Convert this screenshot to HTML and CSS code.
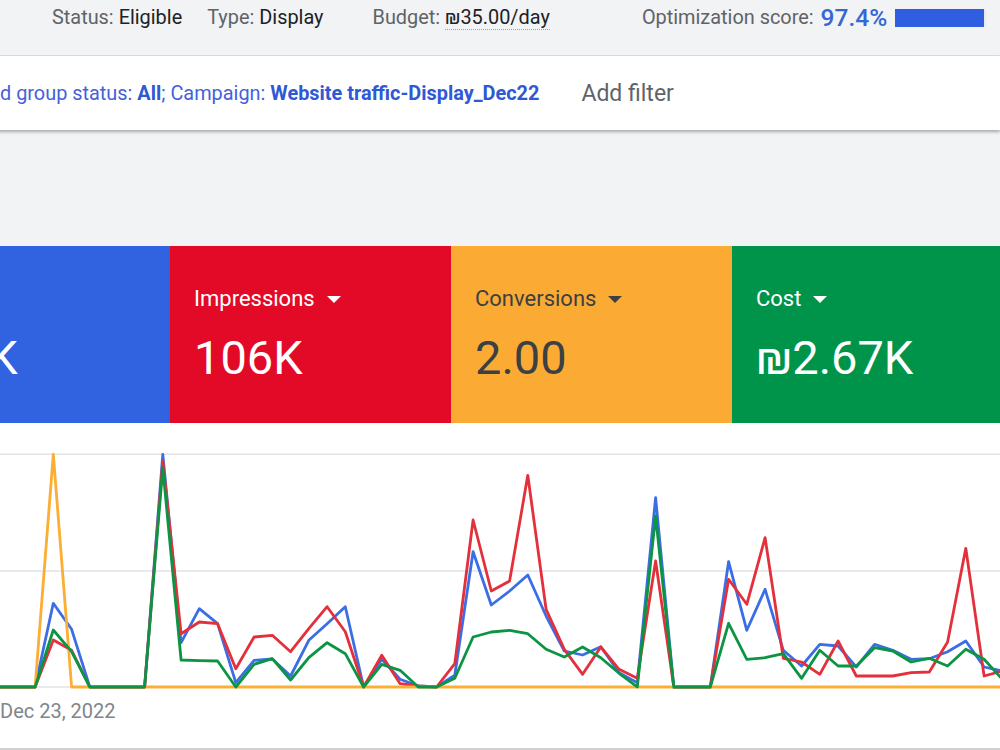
FILE: index.html
```html
<!DOCTYPE html>
<html lang="en">
<head>
  <meta charset="UTF-8" />
  <meta name="viewport" content="width=device-width, initial-scale=1.0"/>
  <title>Campaign overview</title>
  <link rel="stylesheet" href="styles.css">
</head>
<body>
  <div class="summary-bar">
    <span class="item"><span class="key">Status:</span> <span class="val">Eligible</span></span>
    <span class="item item-type"><span class="key">Type:</span> <span class="val">Display</span></span>
    <span class="item item-budget"><span class="key">Budget:</span> <span class="val budget">&#8362;35.00/day</span></span>
    <span class="item item-score">
      <span class="key">Optimization score:</span>
      <span class="score">97.4%</span>
      <span class="score-track"><span class="score-fill" style="width: 97.4%"></span></span>
    </span>
  </div>

  <div class="filter-bar">
    <span class="filter-text">Ad group status: <b>All</b>; Campaign: <b>Website traffic-Display_Dec22</b></span>
    <span class="add-filter">Add filter</span>
  </div>

  <div class="scorecards">
    <div class="card card-blue">
      <div class="card-label">Clicks <span class="caret"></span></div>
      <div class="card-value">1.5K</div>
    </div>
    <div class="card card-red">
      <div class="card-label">Impressions <span class="caret"></span></div>
      <div class="card-value">106K</div>
    </div>
    <div class="card card-orange">
      <div class="card-label">Conversions <span class="caret"></span></div>
      <div class="card-value">2.00</div>
    </div>
    <div class="card card-green">
      <div class="card-label">Cost <span class="caret"></span></div>
      <div class="card-value">&#8362;2.67K</div>
    </div>
  </div>

  <div class="chart">
    <svg class="chart-svg" width="1000" height="255" viewBox="0 0 1000 255">
      <g class="grid">
        <line x1="0" y1="13.3" x2="1000" y2="13.3"/>
        <line x1="0" y1="130" x2="1000" y2="130"/>
        <line x1="0" y1="246" x2="1000" y2="246"/>
      </g>
      <!-- clicks -->
      <polyline class="ln ln-blue" points="-1.5,246 16.8,246 35.1,246 53.3,162.3 71.6,188.3 89.8,246 108.1,246 126.3,246 144.6,246 162.8,13.3 181.1,201.7 199.3,167.7 217.6,182.7 235.8,241.7 254.1,219.3 272.3,218 290.6,235 308.8,199.3 327.1,182.7 345.3,165.7 363.6,246 381.8,218.3 400.1,238.3 418.3,245 436.6,246 454.8,234.3 473.1,110.7 491.3,164 509.6,150 527.8,134 546.1,175 564.3,210 582.6,214 600.8,205.7 619.1,231.7 637.3,241.7 655.6,56.7 673.8,246 692.1,246 710.3,246 728.6,120.7 746.8,189.3 765.1,148.3 783.3,209.3 801.6,225 819.8,203.3 838.1,205 856.3,226 874.6,203.3 892.8,209.3 911.1,218.3 929.3,217.7 947.6,210.7 965.8,200 984.1,226 1002.3,230"/>
      <!-- impressions -->
      <polyline class="ln ln-red" points="-1.5,246 16.8,246 35.1,246 53.3,199 71.6,209.3 89.8,246 108.1,246 126.3,246 144.6,246 162.8,20 181.1,192.7 199.3,181 217.6,182.7 235.8,227.7 254.1,196 272.3,194.3 290.6,210.7 308.8,187.7 327.1,165.7 345.3,190.7 363.6,246 381.8,214.3 400.1,242.7 418.3,245 436.6,246 454.8,222.7 473.1,79 491.3,150 509.6,140 527.8,34.3 546.1,168.3 564.3,208.3 582.6,233.3 600.8,206 619.1,228.3 637.3,237.3 655.6,120 673.8,246 692.1,246 710.3,246 728.6,138.3 746.8,163.3 765.1,96.7 783.3,217.3 801.6,221 819.8,233.3 838.1,200 856.3,235 874.6,235 892.8,235 911.1,231.7 929.3,231 947.6,201 965.8,107.3 984.1,235 1002.3,230"/>
      <!-- conversions -->
      <polyline class="ln ln-orange" points="-1.5,246 35.1,246 53.3,13.3 71.6,246 1002.3,246"/>
      <!-- cost -->
      <polyline class="ln ln-green" points="-1.5,246 16.8,246 35.1,246 53.3,189 71.6,210.7 89.8,246 108.1,246 126.3,246 144.6,246 162.8,26.7 181.1,219 199.3,219.7 217.6,220 235.8,246 254.1,223.3 272.3,217.7 290.6,239 308.8,216.7 327.1,201.7 345.3,212.7 363.6,246 381.8,223.3 400.1,229.3 418.3,246 436.6,246 454.8,237.3 473.1,196 491.3,191 509.6,189.3 527.8,192.7 546.1,208.3 564.3,216 582.6,206 600.8,216.7 619.1,232.3 637.3,246 655.6,75 673.8,246 692.1,246 710.3,246 728.6,182.3 746.8,218.3 765.1,216.7 783.3,212.7 801.6,237.3 819.8,209.3 838.1,225 856.3,225 874.6,206.7 892.8,210 911.1,221 929.3,217.3 947.6,225 965.8,208.3 984.1,218.3 1002.3,238.3"/>
    </svg>
    <div class="axis-label">Dec 23, 2022</div>
  </div>
</body>
</html>
```

FILE: styles.css
```css
body {
  margin: 0;
  background: #f1f3f4;
  font-family: Roboto, "Liberation Sans", Arial, sans-serif;
  overflow: hidden;
}

.summary-bar {
  height: 56px;
  border-bottom: 1px solid #dadce0;
  display: flex;
  align-items: flex-start;
  padding: 6px 0 0 52px;
  box-sizing: border-box;
  font-size: 19.9px;
  line-height: 24px;
  white-space: nowrap;
}

.key {
  color: #5f6368;
}

.val {
  color: #202124;
}

.item-type {
  margin-left: 25px;
}

.item-budget {
  margin-left: 49px;
}

.budget {
  border-bottom: 1px dotted #9aa0a6;
}

.item-score {
  margin-left: 92px;
  display: flex;
  align-items: center;
}

.score {
  color: #3367d6;
  font-size: 24.5px;
  font-weight: 500;
  margin-left: 7px;
}

.score-track {
  display: block;
  width: 91px;
  height: 18px;
  margin-left: 8px;
  background: #e8eaed;
}

.score-fill {
  display: block;
  height: 100%;
  background: #2f5fe0;
}

.filter-bar {
  height: 74px;
  background: #fff;
  box-shadow: 0 2px 3px rgba(0, 0, 0, 0.3);
  display: flex;
  align-items: center;
  margin-left: -13px;
  font-size: 19.9px;
  white-space: nowrap;
}

.filter-text {
  color: #4561da;
}

.filter-text b {
  color: #2e58d6;
  font-weight: 700;
}

.add-filter {
  margin-left: 42px;
  color: #5f6368;
  font-size: 23px;
}

.scorecards {
  margin-top: 116px;
  margin-left: -111px;
  height: 177px;
  display: flex;
}

.card {
  flex: 0 0 281px;
  padding: 40px 0 0 24px;
  box-sizing: border-box;
  color: #fff;
}

.card-blue {
  background: #3162df;
}

.card-blue .card-value {
  margin-left: 10px;
}

.card-red {
  background: #e30a28;
}

.card-orange {
  background: #fbab33;
  color: #3c4043;
}

.card-green {
  background: #00944a;
}

.card-label {
  font-size: 22px;
  line-height: 26px;
  display: flex;
  align-items: center;
}

.caret {
  width: 0;
  height: 0;
  margin-left: 12px;
  border-left: 7px solid transparent;
  border-right: 7px solid transparent;
  border-top: 7px solid currentColor;
}

.card-value {
  margin-top: 18px;
  font-size: 47px;
  line-height: 56px;
}

.chart {
  background: #fff;
  padding: 18px 0 25px;
  border-bottom: 2px solid #d0d0d0;
}

.chart-svg {
  display: block;
}

.grid line {
  stroke: #e3e3e3;
  stroke-width: 1.5;
}

.ln {
  fill: none;
  stroke-width: 2.8;
  stroke-linejoin: round;
}

.ln-blue {
  stroke: #3b6ee4;
}

.ln-red {
  stroke: #e3303b;
}

.ln-orange {
  stroke: #fbad34;
}

.ln-green {
  stroke: #0c9445;
}

.axis-label {
  margin-top: 3px;
  font-size: 20px;
  line-height: 24px;
  color: #80868b;
}
```
